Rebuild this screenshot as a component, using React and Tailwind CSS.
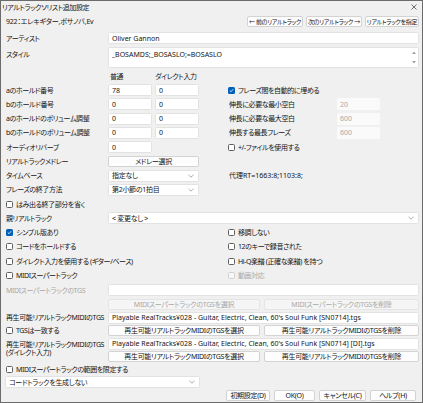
import React from 'react';

const font = "[font-family:'Noto_Sans','Noto_Sans_CJK_JP',sans-serif] [font-feature-settings:'palt']";

const Chevron = () => (
  <svg width="6" height="4" viewBox="0 0 6 4" className="shrink-0">
    <path d="M0.5 0.8 L3 3.2 L5.5 0.8" fill="none" stroke="#8a8a8a" strokeWidth="0.7" />
  </svg>
);

const Input = ({ value = '', className = '', disabled = false }) => (
  <div
    className={`h-[12px] flex items-center px-[3px] rounded-[1.5px] overflow-hidden whitespace-nowrap ${
      disabled ? 'bg-[#fafafa] text-[#a8a8a8]' : 'bg-white border border-[#e2e2e2]'
    } ${className}`}
  >
    {value}
  </div>
);

const Btn = ({ children, className = '', disabled = false }) => (
  <div
    className={`h-[11px] flex items-center justify-center rounded-[2px] border whitespace-nowrap tracking-[-0.3px] ${
      disabled ? 'bg-[#f5f5f5] border-[#e5e5e5] text-[#a8a8a8]' : 'bg-[#fdfdfd] border-[#d3d3d3]'
    } ${className}`}
  >
    {children}
  </div>
);

const Select = ({ value, className = '' }) => (
  <div className={`h-[12px] flex items-center justify-between pl-[3px] pr-[4px] bg-white border border-[#e2e2e2] rounded-[1.5px] tracking-[-0.3px] ${className}`}>
    <span>{value}</span>
    <Chevron />
  </div>
);

const Check = ({ checked = false, disabled = false, label }) => (
  <div className="flex items-center gap-[3px] whitespace-nowrap tracking-[-0.4px]">
    <span
      className={`w-[7px] h-[7px] rounded-[1.5px] flex items-center justify-center shrink-0 ${
        checked
          ? 'bg-[#005fb8]'
          : disabled
          ? 'border border-[#cfcfcf] bg-[#f7f7f7]'
          : 'border border-[#5f5f5f] bg-white'
      }`}
    >
      {checked && (
        <svg width="5" height="5" viewBox="0 0 5 5">
          <path d="M0.8 2.6 L2 3.7 L4.2 1.2" fill="none" stroke="white" strokeWidth="0.8" />
        </svg>
      )}
    </span>
    <span className={disabled ? 'text-[#a8a8a8]' : ''}>{label}</span>
  </div>
);

const Row = ({ children, className = '' }) => (
  <div className={`flex h-[14.25px] items-center ${className}`}>{children}</div>
);

const Label = ({ children, className = '' }) => (
  <div className={`w-[107px] pl-[5px] shrink-0 whitespace-nowrap tracking-[-0.4px] ${className}`}>{children}</div>
);

const holdRows = [
  { label: 'aのホールド番号', a: '78', b: '0', right: <Check checked label="フレーズ間を自動的に埋める" /> },
  { label: 'bのホールド番号', a: '0', b: '0', right: 'min' },
  { label: 'aのホールドのボリューム調整', a: '0', b: '0', right: 'max' },
  { label: 'bのホールドのボリューム調整', a: '0', b: '0', right: 'long' },
];

const stretch = {
  min: { label: '伸長に必要な最小空白', value: '20' },
  max: { label: '伸長に必要な最大空白', value: '600' },
  long: { label: '伸長する最長フレーズ', value: '600' },
};

export default function App() {
  return (
    <div className={`w-[423px] h-[403px] bg-[#f0f0f0] border border-[#6b6b6b] text-[7px] leading-none text-[#141414] overflow-hidden ${font}`}>
      {/* title bar */}
      <div className="h-[12px] flex items-center justify-between pl-[1px] pr-[5px] tracking-[-0.4px]">
        <span>リアルトラックソリスト追加設定</span>
        <svg width="6" height="6" viewBox="0 0 6 6">
          <path d="M0.5 0.5 L5.5 5.5 M5.5 0.5 L0.5 5.5" stroke="#333" strokeWidth="0.7" />
        </svg>
      </div>

      <div className="h-[17px] flex items-center justify-between pl-[5px] pr-[3px]">
        <span className="tracking-[-0.2px]">922：エレキギター,ボサノバ,Ev</span>
        <div className="flex gap-[3px] text-[6px]">
          <Btn className="w-[56px]">← 前のリアルトラック</Btn>
          <Btn className="w-[56px]">次のリアルトラック →</Btn>
          <Btn className="w-[54px]">リアルトラックを指定</Btn>
        </div>
      </div>

      <div className="flex items-center h-[16px]">
        <Label>アーティスト</Label>
        <Input value="Oliver Gannon" className="w-[311px]" />
      </div>

      <div className="flex h-[23px] mt-[1px]">
        <Label className="pt-[4px]">スタイル</Label>
        <div className="w-[311px] h-[21px] bg-white border border-[#e2e2e2] rounded-[1.5px] flex justify-between pl-[3px] pr-[2px] pt-[3px]">
          <span>_BOSAMDS;_BOSASLO;=BOSASLO</span>
          <div className="flex flex-col justify-between pb-[3px]">
            <svg width="4" height="3" viewBox="0 0 4 3"><path d="M0 3 L2 0.5 L4 3 Z" fill="#a0a0a0" /></svg>
            <svg width="4" height="3" viewBox="0 0 4 3"><path d="M0 0 L2 2.5 L4 0 Z" fill="#a0a0a0" /></svg>
          </div>
        </div>
      </div>

      <div className="flex items-center h-[13px] tracking-[-0.4px]">
        <Label />
        <div className="w-[47px] pl-[2px]">普通</div>
        <div>ダイレクト入力</div>
      </div>

      {holdRows.map((r) => (
        <Row key={r.label}>
          <Label>{r.label}</Label>
          <Input value={r.a} className="w-[44px]" />
          <Input value={r.b} className="w-[44px] ml-[3px]" />
          <div className="ml-[29px] flex items-center">
            {r.right === 'min' || r.right === 'max' || r.right === 'long' ? (
              <>
                <div className="w-[109px] pl-[1px] tracking-[-0.4px]">{stretch[r.right].label}</div>
                <Input value={stretch[r.right].value} disabled className="w-[43px]" />
              </>
            ) : (
              r.right
            )}
          </div>
        </Row>
      ))}

      <Row>
        <Label>オーディオリバーブ</Label>
        <Input value="0" className="w-[44px]" />
        <div className="ml-[76px]">
          <Check label="+/-ファイルを使用する" />
        </div>
      </Row>

      <Row>
        <Label>リアルトラックメドレー</Label>
        <Btn className="w-[91px]">メドレー選択</Btn>
      </Row>

      <Row>
        <Label>タイムベース</Label>
        <Select value="指定なし" className="w-[91px]" />
        <div className="ml-[29px] pl-[1px]">代理RT=1663:8;1103:8;</div>
      </Row>

      <Row>
        <Label>フレーズの終了方法</Label>
        <Select value="第2小節の1拍目" className="w-[91px]" />
      </Row>

      <Row className="pl-[5px]">
        <Check label="はみ出る終了部分を省く" />
      </Row>

      <Row>
        <Label>親リアルトラック</Label>
        <Select value="< 変更なし >" className="w-[311px]" />
      </Row>

      {[
        [<Check checked label="シンプル版あり" />, <Check label="移調しない" />],
        [<Check label="コードをホールドする" />, <Check label="12のキーで録音された" />],
        [<Check label="ダイレクト入力を使用する (ギター/ベース)" />, <Check label="Hi-Q楽譜 (正確な楽譜) を持つ" />],
        [<Check label="MIDIスーパートラック" />, <Check disabled label="動画対応" />],
      ].map((pair, i) => (
        <Row key={i} className="pl-[5px]">
          <div className="w-[222px]">{pair[0]}</div>
          {pair[1]}
        </Row>
      ))}

      <div className="flex items-center h-[15.5px]">
        <Label className="text-[#a8a8a8]">MIDIスーパートラックのTGS</Label>
        <Input className="w-[311px]" />
      </div>

      <div className="flex items-center h-[13px]">
        <Label />
        <Btn disabled className="w-[152px] h-[10px]">MIDIスーパートラックのTGSを選択</Btn>
        <Btn disabled className="w-[155px] h-[10px] ml-[4px]">MIDIスーパートラックのTGSを削除</Btn>
      </div>

      <div className="flex items-center h-[13px]">
        <Label>再生可能リアルトラックMIDIのTGS</Label>
        <Input
          value="Playable RealTracks¥028 - Guitar, Electric, Clean, 60's Soul Funk [SN0714].tgs"
          className="w-[311px] h-[11px]"
        />
      </div>

      <div className="flex items-center h-[13px]">
        <Label>
          <Check label="TGSは一致する" />
        </Label>
        <Btn className="w-[152px] h-[10px]">再生可能リアルトラックMIDIのTGSを選択</Btn>
        <Btn className="w-[155px] h-[10px] ml-[4px]">再生可能リアルトラックMIDIのTGSを削除</Btn>
      </div>

      <div className="flex h-[26px]">
        <Label className="flex flex-col gap-[1px] pt-[4px]">
          <span>再生可能リアルトラックMIDIのTGS</span>
          <span>(ダイレクト入力)</span>
        </Label>
        <div className="flex flex-col">
          <div className="h-[13px] flex items-center">
            <Input
              value="Playable RealTracks¥028 - Guitar, Electric, Clean, 60's Soul Funk [SN0714] [DI].tgs"
              className="w-[311px] h-[11px]"
            />
          </div>
          <div className="h-[13px] flex items-center">
            <Btn className="w-[152px] h-[10px]">再生可能リアルトラックMIDIのTGSを選択</Btn>
            <Btn className="w-[155px] h-[10px] ml-[4px]">再生可能リアルトラックMIDIのTGSを削除</Btn>
          </div>
        </div>
      </div>

      <div className="flex items-center h-[13px] pl-[5px]">
        <Check label="MIDIスーパートラックの範囲を限定する" />
      </div>

      <div className="flex items-center h-[12px] pl-[4px]">
        <Select value="コードトラックを生成しない" className="w-[195px] h-[11px]" />
      </div>

      <div className="flex items-center justify-end h-[14px] pr-[6px] gap-[4px]">
        <Btn className="w-[44px]">初期設定(D)</Btn>
        <Btn className="w-[41px] border-[#3a3a3a]">OK(O)</Btn>
        <Btn className="w-[47px]">キャンセル(C)</Btn>
        <Btn className="w-[46px]">ヘルプ(H)</Btn>
      </div>
    </div>
  );
}
